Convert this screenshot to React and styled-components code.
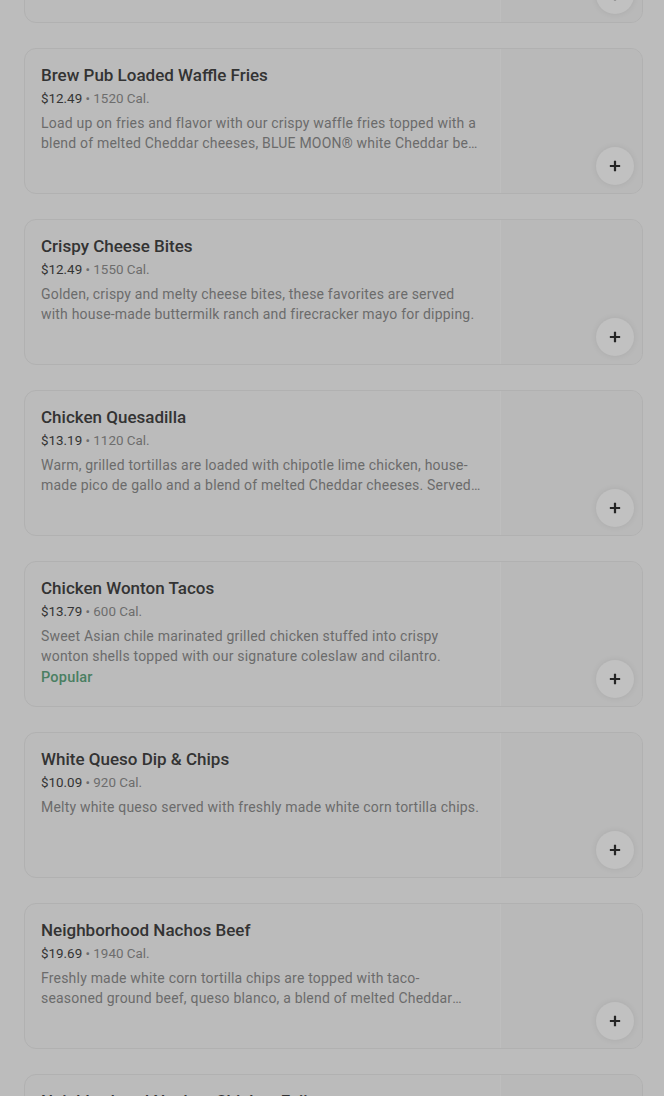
import React from 'react';
import styled, { createGlobalStyle } from 'styled-components';

const GlobalStyle = createGlobalStyle`
  html, body {
    margin: 0;
    padding: 0;
    background: #bcbcbc;
    font-family: Roboto, "Noto Sans", Arial, sans-serif;
    overflow: hidden;
  }
`;

const items = [
  {
    name: 'Boneless Wings',
    price: '$11.99',
    cal: '1090 Cal.',
    desc: 'Crispy breaded boneless chicken wings tossed in your choice of sauce, served with celery and your choice of dressing.',
  },
  {
    name: 'Brew Pub Loaded Waffle Fries',
    price: '$12.49',
    cal: '1520 Cal.',
    desc: 'Load up on fries and flavor with our crispy waffle fries topped with a blend of melted Cheddar cheeses, BLUE MOON® white Cheddar beer cheese sauce, bacon and green onions.',
  },
  {
    name: 'Crispy Cheese Bites',
    price: '$12.49',
    cal: '1550 Cal.',
    desc: 'Golden, crispy and melty cheese bites, these favorites are served with house-made buttermilk ranch and firecracker mayo for dipping.',
  },
  {
    name: 'Chicken Quesadilla',
    price: '$13.19',
    cal: '1120 Cal.',
    desc: 'Warm, grilled tortillas are loaded with chipotle lime chicken, house-made pico de gallo and a blend of melted Cheddar cheeses. Served with sour cream and salsa.',
  },
  {
    name: 'Chicken Wonton Tacos',
    price: '$13.79',
    cal: '600 Cal.',
    desc: 'Sweet Asian chile marinated grilled chicken stuffed into crispy wonton shells topped with our signature coleslaw and cilantro.',
    popular: true,
  },
  {
    name: 'White Queso Dip & Chips',
    price: '$10.09',
    cal: '920 Cal.',
    desc: 'Melty white queso served with freshly made white corn tortilla chips.',
  },
  {
    name: 'Neighborhood Nachos Beef',
    price: '$19.69',
    cal: '1940 Cal.',
    desc: 'Freshly made white corn tortilla chips are topped with taco-seasoned ground beef, queso blanco, a blend of melted Cheddar cheeses, pico de gallo and jalapeños.',
  },
  {
    name: 'Neighborhood Nachos Chicken Fajita',
    price: '$19.69',
    cal: '1800 Cal.',
    desc: 'Freshly made white corn tortilla chips are topped with grilled fajita chicken, queso blanco and a blend of melted Cheddar cheeses.',
  },
];

const List = styled.div`
  display: flex;
  flex-direction: column;
  gap: 25px;
  padding: 0 21px 0 24px;
  margin-top: -123px;
`;

const Card = styled.div`
  display: grid;
  grid-template-columns: 1fr 142px;
  height: 146px;
  box-sizing: border-box;
  border: 1px solid #b1b1b1;
  border-radius: 12px;
  background: #bbbbbb;
  position: relative;
  overflow: hidden;
`;

const Info = styled.div`
  padding: 15px 19px 0 16px;
  min-width: 0;
`;

const Title = styled.div`
  font-size: 17px;
  font-weight: 500;
  line-height: 22px;
  color: #333333;
  white-space: nowrap;
`;

const Meta = styled.div`
  margin-top: 3px;
  font-size: 13.4px;
  line-height: 20px;
  color: #6d6d6d;
`;

const Price = styled.span`
  color: #343434;
`;

const Desc = styled.div`
  margin-top: 4px;
  font-size: 14px;
  letter-spacing: 0.2px;
  line-height: 20px;
  color: #6b6b6b;
  display: -webkit-box;
  -webkit-line-clamp: 2;
  -webkit-box-orient: vertical;
  overflow: hidden;
`;

const Badge = styled.div`
  margin-top: 2px;
  font-size: 14.5px;
  letter-spacing: 0.2px;
  line-height: 20px;
  font-weight: 500;
  color: #4a7f62;
`;

const Thumb = styled.div`
  background: #b9b9b9;
  border-left: 1px solid #bebebe;
`;

const AddButton = styled.button`
  position: absolute;
  right: 8px;
  bottom: 8px;
  width: 38px;
  height: 38px;
  border-radius: 50%;
  border: none;
  background: #c1c1c1;
  box-shadow: 0 0 6px rgba(0, 0, 0, 0.08);
  display: flex;
  align-items: center;
  justify-content: center;
  padding: 0;
  cursor: pointer;
`;

const PlusIcon = () => (
  <svg width="12" height="12" viewBox="0 0 14 14">
    <path d="M7 1v12M1 7h12" stroke="#252525" strokeWidth="2.6" />
  </svg>
);

const MenuItem = ({ item }) => (
  <Card>
    <Info>
      <Title>{item.name}</Title>
      <Meta>
        <Price>{item.price}</Price> • {item.cal}
      </Meta>
      <Desc>{item.desc}</Desc>
      {item.popular && <Badge>Popular</Badge>}
    </Info>
    <Thumb />
    <AddButton aria-label="Add">
      <PlusIcon />
    </AddButton>
  </Card>
);

export default function App() {
  return (
    <>
      <GlobalStyle />
      <List>
        {items.map((item) => (
          <MenuItem key={item.name} item={item} />
        ))}
      </List>
    </>
  );
}
